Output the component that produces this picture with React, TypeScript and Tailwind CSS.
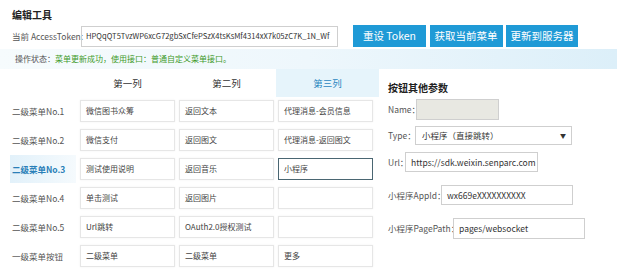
const ROWS: { label: string; cells: string[]; active?: boolean }[] = [
  { label: "二级菜单No.1", cells: ["微信图书众筹", "返回文本", "代理消息-会员信息"] },
  { label: "二级菜单No.2", cells: ["微信支付", "返回图文", "代理消息-返回图文"] },
  { label: "二级菜单No.3", cells: ["测试使用说明", "返回音乐", "小程序"], active: true },
  { label: "二级菜单No.4", cells: ["单击测试", "返回图片", ""] },
  { label: "二级菜单No.5", cells: ["Url跳转", "OAuth2.0授权测试", ""] },
  { label: "一级菜单按钮", cells: ["二级菜单", "二级菜单", "更多"] },
];

const TOKEN = "HPQqQT5TvzWP6xcG72gbSxCfePSzX4tsKsMf4314xX7k05zC7K_1N_Wf";

function Field({
  label,
  labelW,
  value,
  inputW,
  h,
  className,
  gray,
}: {
  label: string;
  labelW: string;
  value: string;
  inputW: string;
  h: string;
  className: string;
  gray?: boolean;
}) {
  return (
    <div className={`flex items-center ${className}`}>
      <span className={`${labelW} shrink-0 whitespace-nowrap text-[8.5px] text-[#555]`}>{label}</span>
      <div
        className={`${inputW} ${h} flex items-center border border-[#cfcfcf] px-[5px] text-[8.5px] text-[#333] ${
          gray ? "bg-[#e8e8e2]" : "bg-white"
        }`}
      >
        {value}
      </div>
    </div>
  );
}

export default function App() {
  return (
    <div className="w-[617px] h-[277px] overflow-hidden bg-white text-[#333] font-['Noto_Sans_CJK_SC','Noto_Sans',sans-serif]">
      {/* Title */}
      <div className="pl-[12px] pt-[9px] text-[10px] font-bold leading-[12px] text-[#222]">编辑工具</div>

      {/* Token row */}
      <div className="mt-[4px] flex h-[22px] items-center pl-[12px]">
        <span className="w-[69px] shrink-0 whitespace-nowrap text-[8.5px] text-[#555]">当前 AccessToken:</span>
        <div className="flex h-[21px] w-[257px] items-center overflow-hidden whitespace-nowrap border border-[#cfcfcf] px-[4px] text-[7.6px] text-[#333]">
          {TOKEN}
        </div>
        <div className="ml-[15px] flex gap-[3.5px]">
          <button className="h-[22px] w-[73px] bg-[#1f9ad6] text-[10.5px] text-white">重设 Token</button>
          <button className="h-[22px] w-[73px] bg-[#1f9ad6] text-[10.5px] text-white">获取当前菜单</button>
          <button className="h-[22px] w-[72px] bg-[#1f9ad6] text-[10.5px] text-white">更新到服务器</button>
        </div>
      </div>

      {/* Status */}
      <div className="mt-[2px] flex h-[20px] items-center bg-gradient-to-r from-[#f6fbfd] via-[#eef7fc] to-[#dceff9] pl-[15px] text-[8px]">
        <span className="text-[#555]">操作状态：</span>
        <span className="text-[#3e9a2a]">菜单更新成功，使用接口：普通自定义菜单接口。</span>
      </div>

      <div className="flex">
        {/* Menu table */}
        <div className="pl-[12px]">
          <div className="grid h-[28px] grid-cols-[64px_95px_95px_95px] gap-x-[4px] text-[9.5px]">
            <div />
            <div className="flex items-center justify-center">第一列</div>
            <div className="flex items-center justify-center">第二列</div>
            <div className="-mr-[6px] -ml-[2px] flex items-center justify-center bg-[#e6f4fb] text-[#2a86c0]">第三列</div>
          </div>
          <div className="mt-[3px] flex flex-col gap-[7px]">
            {ROWS.map((row) => (
              <div key={row.label} className="grid h-[22px] grid-cols-[64px_95px_95px_95px] gap-x-[4px]">
                <div
                  className={`-ml-[2px] -my-[3px] flex items-center whitespace-nowrap pl-[2px] text-[8.5px] ${
                    row.active
                      ? "bg-gradient-to-r from-[#e2f1fa] to-[#f5fafd] font-bold text-[#2a7fb8]"
                      : "text-[#555]"
                  }`}
                >
                  {row.label}
                </div>
                {row.cells.map((c, i) => (
                  <div
                    key={i}
                    className={`flex items-center whitespace-nowrap px-[5px] text-[8px] text-[#444] ${
                      row.active && i === 2
                        ? "border border-[#4a6672]"
                        : "border border-[#e6e6e6] shadow-[0_0_2px_rgba(0,0,0,0.06)]"
                    }`}
                  >
                    {c}
                  </div>
                ))}
              </div>
            ))}
          </div>
        </div>

        {/* Button params */}
        <div className="ml-[15px] flex flex-col">
          <div className="mt-[13px] text-[10px] font-bold leading-[12px] text-[#222]">按钮其他参数</div>
          <Field label="Name：" labelW="w-[28px]" value="" inputW="w-[83px]" h="h-[21px]" className="mt-[5px]" gray />
          <div className="mt-[6px] flex items-center">
            <span className="w-[27px] shrink-0 whitespace-nowrap text-[8.5px] text-[#555]">Type：</span>
            <div className="flex h-[19px] w-[157px] items-center justify-between border border-[#cfcfcf] pl-[6px] pr-[5px] text-[8.5px] text-[#333]">
              <span>小程序（直接跳转）</span>
              <span className="text-[6px] text-[#333]">▼</span>
            </div>
          </div>
          <Field
            label="Url："
            labelW="w-[17px]"
            value="https://sdk.weixin.senparc.com"
            inputW="w-[133px]"
            h="h-[20px]"
            className="mt-[7px]"
          />
          <Field
            label="小程序AppId："
            labelW="w-[53px]"
            value="wx669eXXXXXXXXXX"
            inputW="w-[132px]"
            h="h-[20px]"
            className="mt-[13px]"
          />
          <Field
            label="小程序PagePath："
            labelW="w-[65px]"
            value="pages/websocket"
            inputW="w-[132px]"
            h="h-[21px]"
            className="mt-[13px]"
          />
        </div>
      </div>
    </div>
  );
}
